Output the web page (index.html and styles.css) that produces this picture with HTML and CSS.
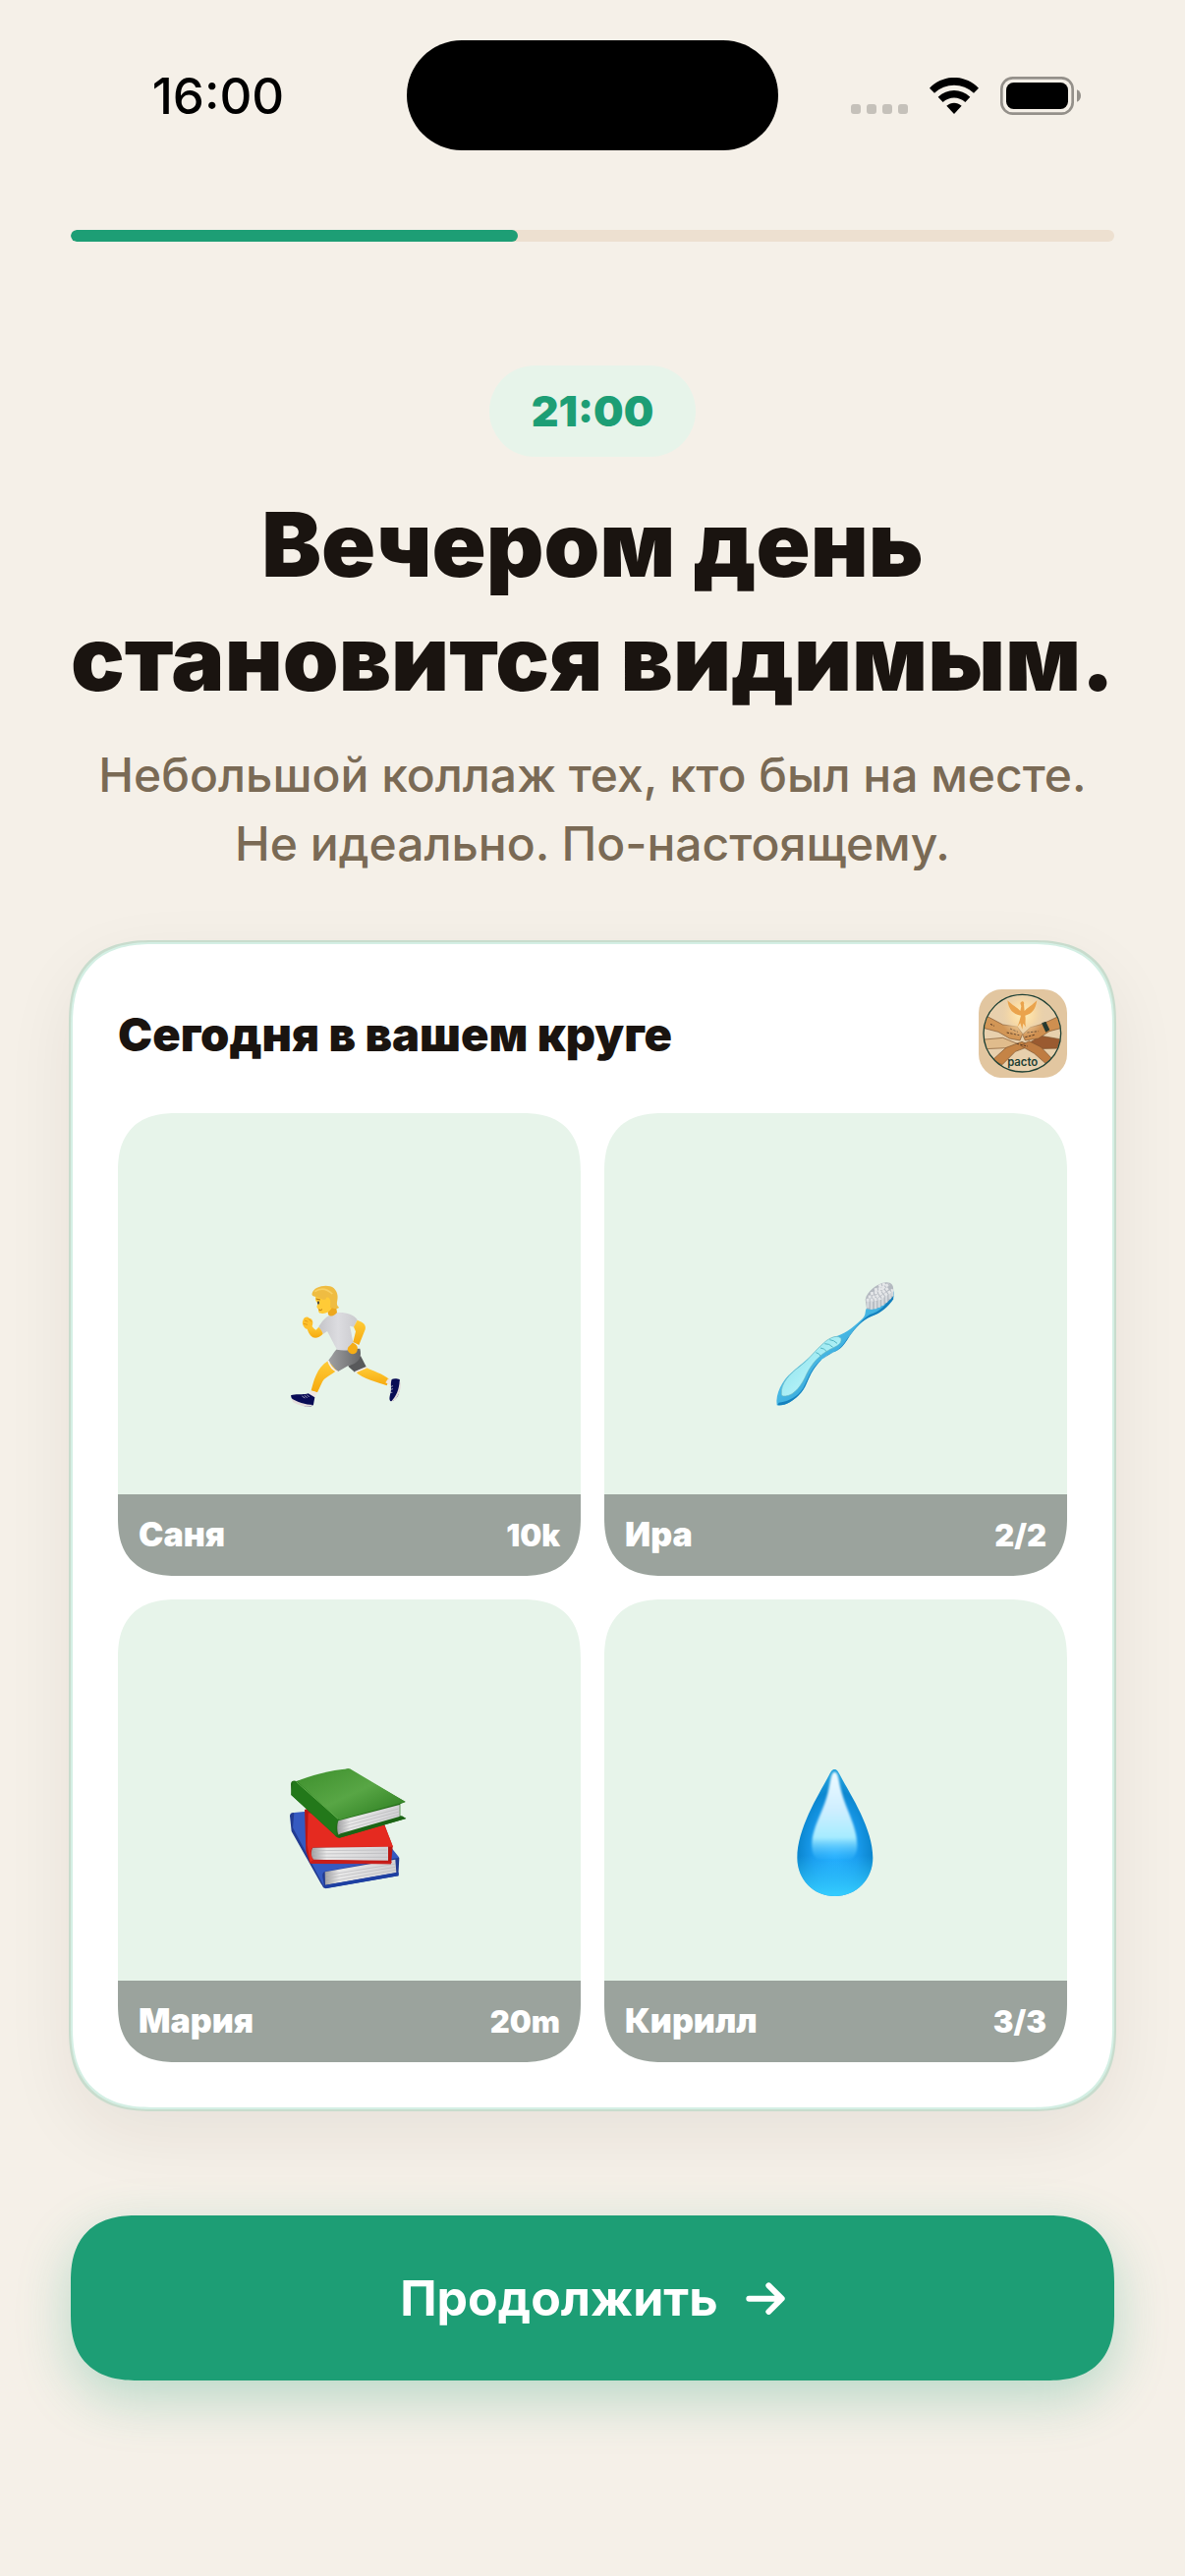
FILE: index.html
```html
<!DOCTYPE html>
<html lang="ru">
<head>
    <meta charset="UTF-8">
    <meta name="viewport" content="width=device-width, initial-scale=1.0">
    <title>Pacto</title>
    <link rel="stylesheet" href="styles.css">
</head>
<body>
    <header class="status-bar">
        <time class="clock">16:00</time>
        <div class="island"></div>
        <div class="status-icons">
            <div class="signal"><i></i><i></i><i></i><i></i></div>
            <svg class="wifi" viewBox="0 0 150 111" aria-hidden="true">
                <path d="M0 32C42-11 108-11 150 32L135 47C102 15 48 15 15 47Z"/>
                <path d="M26 59C54 32 96 32 124 59L109 75C90 57 60 57 41 75Z"/>
                <path d="M52 86C66 74 84 74 98 86L75 111Z"/>
            </svg>
            <svg class="battery" viewBox="0 0 246 117" aria-hidden="true">
                <rect x="4" y="4" width="217" height="109" rx="34" fill="none" stroke="#94908a" stroke-width="8"/>
                <rect x="18" y="18" width="189" height="81" rx="23"/>
                <path d="M234 40C250 46 250 71 234 77Z" fill="#94908a"/>
            </svg>
        </div>
    </header>

    <main>
        <progress class="progress" value="3" max="7" aria-label="Шаг 3 из 7"></progress>

        <section class="intro">
            <p class="badge">21:00</p>
            <h1>Вечером день<br>становится видимым.</h1>
            <p class="subtitle">Небольшой коллаж тех, кто был на месте.<br>Не идеально. По-настоящему.</p>
        </section>

        <section class="card">
            <div class="card-header">
                <h2>Сегодня в вашем круге</h2>
                <svg class="logo" viewBox="0 0 270 270" aria-hidden="true">
                    <defs>
                        <radialGradient id="glow">
                            <stop offset="0" stop-color="#fff1b8"/>
                            <stop offset=".5" stop-color="#fbdca4" stop-opacity=".8"/>
                            <stop offset="1" stop-color="#e9cfa8" stop-opacity="0"/>
                        </radialGradient>
                        <clipPath id="ring"><circle cx="133" cy="134" r="117"/></clipPath>
                    </defs>
                    <rect width="270" height="270" fill="#e2c6a0"/>
                    <circle cx="133" cy="134" r="118" fill="#e8d0ad"/>
                    <g clip-path="url(#ring)">
                        <g stroke="#7d5430" stroke-width="2">
                            <path d="M8 154L74 148L118 166L105 178L20 182Z" fill="#e0bc8c"/>
                            <path d="M260 154L190 142L150 166L166 182L254 180Z" fill="#9a5a30"/>
                            <path d="M42 216L84 178L132 160L160 172L112 190L72 230Z" fill="#c58446"/>
                            <path d="M228 216L190 176L154 158L128 172L170 196L204 226Z" fill="#bf7c42"/>
                            <path d="M10 74L74 108L118 114L134 136L126 156L94 150L60 130L6 116Z" fill="#d29656"/>
                            <path d="M258 76L194 106L158 116L134 138L142 156L182 150L216 128L262 116Z" fill="#cf8f50"/>
                        </g>
                        <path d="M86 132L124 140M96 120L120 130M148 132L182 128M142 146L174 138M116 166L150 174M36 106L48 112" stroke="#553822" stroke-width="3" stroke-dasharray="7 4"/>
                        <path d="M192 103L205 98L217 124L205 131Z" fill="#26392f"/>
                        <ellipse cx="135" cy="74" rx="72" ry="74" fill="url(#glow)"/>
                    </g>
                    <path d="M129 80C104 76 92 62 88 34C104 50 116 54 127 66L130 52L127 42C133 32 141 38 138 46L140 66C152 54 162 50 178 34C174 60 164 75 142 80C145 94 140 100 145 116L136 104L133 122L127 103L117 116C126 98 125 92 129 80Z" fill="#eaa34c"/>
                    <circle cx="133" cy="134" r="118" fill="none" stroke="#1e4034" stroke-width="4"/>
                    <text class="logo-name" x="134" y="234" text-anchor="middle">pacto</text>
                </svg>
            </div>

            <div class="collage">
                <figure class="tile">
                    <svg class="emoji" viewBox="4 10 450 450" aria-hidden="true">
                        <defs>
                            <linearGradient id="shirt"><stop offset="0" stop-color="#c5c5c9"/><stop offset=".5" stop-color="#dcdce0"/><stop offset="1" stop-color="#cacace"/></linearGradient>
                            <linearGradient id="shorts"><stop offset="0" stop-color="#a1a1a3"/><stop offset="1" stop-color="#666769"/></linearGradient>
                            <linearGradient id="skin" x2="0" y2="1"><stop offset="0" stop-color="#ffcc38"/><stop offset="1" stop-color="#f6a90e"/></linearGradient>
                        </defs>
                        <path d="M246 316L278 303C300 315 330 322 350 340L342 359C315 348 268 340 246 316Z" fill="url(#skin)"/>
                        <path d="M338 350L346 338L359 343L355 359Z" fill="#eee5e1"/>
                        <path d="M357 340C364 336 375 338 381 340C384 355 381 377 376 390C371 399 363 405 355 407C347 405 351 390 354 379C357 366 352 354 357 340Z" fill="#080b55"/>
                        <path d="M381 344C390 362 379 391 368 402L355 408C371 391 380 371 381 344Z" fill="#e4dcda"/>
                        <path d="M224 300L262 268L280 303L244 318Z" fill="#58595b"/>
                        <path d="M163 283L190 311C173 328 157 330 146 346L130 380L111 374C119 346 127 305 163 283Z" fill="url(#skin)"/>
                        <path d="M108 375L130 380L121 396L105 389Z" fill="#f0e6e2"/>
                        <path d="M49 389C67 382 86 389 102 383L122 395L118 417C111 426 93 424 80 417C65 408 51 408 49 389Z" fill="#080b55"/>
                        <path d="M50 397C66 409 96 418 116 418C106 430 74 420 56 410Z" fill="#e5dddb"/>
                        <path d="M83 391L92 397M90 389L99 396M98 387L105 394M350 364L361 360M351 372L361 369M350 380L359 380" stroke="#dcdbe4" stroke-width="2"/>
                        <path d="M190 248L260 246C270 285 240 294 223 299L192 317L163 283C178 265 179 257 190 248Z" fill="url(#shorts)"/>
                        <path d="M163 283C168 300 178 311 192 317M245 318L280 303" fill="none" stroke="#f3eeee" stroke-width="5"/>
                        <path d="M190 136C214 134 240 140 252 158L242 180L229 177C235 200 235 220 248 246C225 252 207 253 190 249C179 231 170 211 160 193L148 201L134 179C150 154 163 142 190 136Z" fill="url(#shirt)"/>
                        <path d="M134 180C141 187 145 194 147 201C137 211 127 216 116 212C105 204 101 193 98 183L112 175C117 183 122 188 126 189Z" fill="url(#skin)"/>
                        <path d="M86 160C89 149 100 147 105 153C115 154 118 165 115 174C111 185 101 189 94 185C87 179 82 169 86 160Z" fill="#ffc02b"/>
                        <path d="M91 160L101 164M88 170L100 173M103 155L112 164" stroke="#d58a0f" stroke-width="2"/>
                        <path d="M252 159C270 166 280 173 276 188L257 235L239 226L247 194L241 180Z" fill="url(#skin)"/>
                        <path d="M237 228C250 232 257 240 250 257C241 268 225 262 222 249C223 238 230 238 237 228Z" fill="#f5ad16"/>
                        <path d="M160 112L187 116L190 136C181 147 171 150 163 142Z" fill="#eda71e"/>
                        <path d="M124 86C140 75 168 78 178 96C181 115 171 137 147 139C135 140 132 134 134 128L128 119L131 108L125 100Z" fill="#ffcb37"/>
                        <path d="M114 77C118 59 149 50 169 56C187 61 195 81 191 98C188 110 190 116 196 120C190 128 176 122 169 120L170 103C170 91 158 84 155 96C143 99 139 89 122 87C115 86 112 82 114 77Z" fill="#efbc42"/>
                        <path d="M122 72C141 59 158 62 176 79" fill="none" stroke="#f8d064" stroke-width="5"/>
                        <ellipse cx="133" cy="106" rx="3" ry="5" fill="#3c4149"/>
                        <path d="M126 94L139 97M134 127Q141 131 145 126" fill="none" stroke="#b8710c" stroke-width="3"/>
                    </svg>
                    <figcaption><span class="name">Саня</span><span class="value">10k</span></figcaption>
                </figure>

                <figure class="tile">
                    <svg class="emoji" viewBox="18 10 450 450" aria-hidden="true">
                        <defs>
                            <linearGradient id="handle" x1="0" y1="0" x2="1" y2="1"><stop offset=".3" stop-color="#5bc8ed"/><stop offset=".7" stop-color="#2b9fd6"/></linearGradient>
                            <linearGradient id="grip" x2="1" y2="1"><stop offset="0" stop-color="#82dce9"/><stop offset=".6" stop-color="#b1f1f7"/></linearGradient>
                        </defs>
                        <path d="M62 419C57 383 78 343 108 318C136 294 157 279 181 253C204 228 220 212 247 207C277 198 302 174 323 155C338 140 327 129 340 119L416 67C423 76 421 91 411 102C392 122 376 139 351 147C322 159 301 184 283 208C266 236 258 249 230 259C206 270 190 286 174 310C153 340 155 364 129 388C110 407 85 423 62 419Z" fill="url(#handle)"/>
                        <path d="M68 411C101 408 127 390 142 367C156 343 162 313 193 284C222 259 246 258 266 231C293 193 319 158 346 142C376 134 394 112 416 84L418 95C400 120 382 137 351 147C323 157 302 183 284 208C267 235 257 250 230 259C203 271 188 290 173 311C153 343 153 364 129 388C109 408 86 422 64 418Z" fill="#1580bd"/>
                        <path d="M76 384C73 354 101 322 130 302C161 279 179 250 205 229C226 208 252 204 258 216C260 232 245 238 225 248C189 267 170 291 153 323C139 356 116 389 88 391C79 392 76 389 76 384Z" fill="url(#grip)" stroke="#70bac1" stroke-width="2"/>
                        <path d="M181 258Q191 260 196 269M195 244Q207 245 215 256M208 231Q222 230 233 242M223 219Q236 220 246 230" fill="none" stroke="#55b6c3" stroke-width="3"/>
                        <path d="M332 96C337 72 366 48 393 44C410 42 420 53 417 67L418 85C396 111 365 132 336 125Z" fill="#b4b9c0"/>
                        <path d="M340 101V122M351 102V126M363 101V125M374 95V120M385 90V114M396 79V105M407 72V95M415 65V86" stroke="#d5d9dd" stroke-width="7"/>
                        <path d="M335 98L354 98L377 93L392 82L416 67M341 88L365 88L384 75L403 60M348 78L372 74L391 57M360 67L381 62L405 49M373 56L393 48" fill="none" stroke="#e4e6e8" stroke-width="9" stroke-dasharray="9 3"/>
                    </svg>
                    <figcaption><span class="name">Ира</span><span class="value">2/2</span></figcaption>
                </figure>

                <figure class="tile">
                    <svg class="emoji" viewBox="4 25 450 450" aria-hidden="true">
                        <defs>
                            <linearGradient id="green" x2="1" y2="1"><stop offset="0" stop-color="#3d8f2c"/><stop offset=".5" stop-color="#58a645"/><stop offset="1" stop-color="#26781b"/></linearGradient>
                            <linearGradient id="pages"><stop offset="0" stop-color="#9d9d9f"/><stop offset=".2" stop-color="#e8e8e8"/><stop offset="1" stop-color="#d1d1d4"/></linearGradient>
                        </defs>
                        <path d="M46 203C47 190 59 192 65 196L330 278L380 332L377 386L155 424C147 425 146 416 141 410L51 250Z" fill="#223b91"/>
                        <path d="M59 193L90 190L356 300L380 330L153 373C144 376 145 386 148 399L151 420L55 239Z" fill="#355ac1"/>
                        <path d="M153 374L368 336L371 376L154 414Z" fill="url(#pages)"/>
                        <path d="M158 384L366 350M158 394L368 359M158 405L370 368" stroke="#b7b7b9" stroke-width="2"/>
                        <path d="M151 415L378 375V386L155 425Z" fill="#1d3fa2"/>
                        <path d="M91 184L102 180L335 230L360 296L355 350L107 346L95 310Z" fill="#ba1713"/>
                        <path d="M102 194L335 232L361 297L119 298C107 302 108 320 119 338L108 345L99 292Z" fill="#e52a20"/>
                        <path d="M116 300L346 297V339L120 337C110 329 109 310 116 300Z" fill="url(#pages)"/>
                        <path d="M119 309L342 307M117 319L344 317M118 329L345 329" stroke="#b7b7b9" stroke-width="2"/>
                        <path d="M105 345L121 336L358 342L354 350L111 349Z" fill="#c81e1b"/>
                        <path d="M49 105C50 95 58 94 67 97L224 59L399 160L383 167V203L401 211L197 270C188 271 184 263 180 259L50 139Z" fill="#236c18"/>
                        <path d="M67 97C106 82 167 63 229 59L399 160L193 216Z" fill="url(#green)"/>
                        <path d="M55 99L68 98L198 216C187 222 184 236 188 264L50 139Z" fill="#23781a"/>
                        <path d="M66 99L193 212" fill="none" stroke="#61ad4c" stroke-width="3"/>
                        <path d="M194 218L381 169V207L195 262C190 253 189 232 194 218Z" fill="url(#pages)"/>
                        <path d="M196 229L378 181M195 239L380 190M196 250L380 199" stroke="#b7b7b9" stroke-width="2"/>
                        <path d="M188 264L201 257L388 203L401 211L197 270Z" fill="#1b6415"/>
                    </svg>
                    <figcaption><span class="name">Мария</span><span class="value">20m</span></figcaption>
                </figure>

                <figure class="tile">
                    <svg class="emoji" viewBox="18 26 450 450" aria-hidden="true">
                        <defs>
                            <radialGradient id="water" cx=".5" cy=".65" r=".6"><stop offset="0" stop-color="#24adff"/><stop offset=".5" stop-color="#199bed"/><stop offset=".8" stop-color="#0c87d0"/><stop offset="1" stop-color="#20a0dc"/></radialGradient>
                            <linearGradient id="base" x2="0" y2="1"><stop offset=".68" stop-color="#32c8ff" stop-opacity="0"/><stop offset="1" stop-color="#35ceff"/></linearGradient>
                            <linearGradient id="shine" x2="0" y2="1"><stop offset="0" stop-color="#eefaff"/><stop offset=".45" stop-color="#cdeeff"/><stop offset=".75" stop-color="#a6ecff"/><stop offset="1" stop-color="#3cbdff" stop-opacity=".2"/></linearGradient>
                            <filter id="soft"><feGaussianBlur stdDeviation="3"/></filter>
                        </defs>
                        <path d="M238 62C246 62 250 70 255 80C290 145 355 244 355 332C355 398 304 449 239 449C174 449 124 398 124 332C124 244 186 145 221 80C226 70 230 62 238 62Z" fill="url(#water)"/>
                        <path d="M238 62C246 62 250 70 255 80C290 145 355 244 355 332C355 398 304 449 239 449C174 449 124 398 124 332C124 244 186 145 221 80C226 70 230 62 238 62Z" fill="url(#base)"/>
                        <path d="M238 70C249 70 250 93 257 122C273 188 307 235 307 294C307 320 297 336 283 336H193C177 336 169 320 169 294C169 235 208 188 220 122C226 94 228 70 238 70Z" fill="url(#shine)" filter="url(#soft)"/>
                    </svg>
                    <figcaption><span class="name">Кирилл</span><span class="value">3/3</span></figcaption>
                </figure>
            </div>
        </section>

        <button class="continue" type="button">
            Продолжить
            <svg class="arrow" viewBox="0 0 120 99" aria-hidden="true">
                <path d="M10 50H109M70 10L110 50L70 90"/>
            </svg>
        </button>
    </main>
</body>
</html>
```
FILE: styles.css
```css
:root{
    --bg: #f5f0e8;
    --green: #1d9e75;
    --mint: #e7f4ea;
    --ink: #1a1410;
    --brown: #7a6a55;
    --sand: #ede0d0;
}

*{
    margin: 0;
    padding: 0;
    box-sizing: border-box;
}

body{
    min-height: 100vh;
    background-color: var(--bg);
    color: var(--ink);
    font-family: Inter, "Liberation Sans", sans-serif;
}

/* status bar */
.status-bar{
    display: grid;
    grid-template-columns: 1fr 378px 1fr;
    align-items: center;
    padding-top: 41px;
}

.clock{
    justify-self: center;
    padding-left: 30px;
    color: #000;
    font-size: 51px;
    font-weight: 500;
}

.island{
    height: 112px;
    border-radius: 56px;
    background-color: #000;
}

.status-icons{
    display: flex;
    justify-content: center;
    align-items: center;
    gap: 22px;
    padding-right: 32px;
}

.signal{
    display: flex;
    gap: 6px;
    padding-top: 28px;
}

.signal i{
    width: 10px;
    height: 10px;
    border-radius: 3px;
    background-color: #c5c1ba;
}

.wifi{
    width: 50px;
    height: 37px;
}

.battery{
    width: 82px;
    height: 39px;
}

/* page */
main{
    display: flex;
    flex-direction: column;
    padding: 81px 72px 72px;
}

.progress{
    appearance: none;
    display: block;
    width: 100%;
    height: 12px;
    border: none;
    border-radius: 6px;
    overflow: hidden;
    background-color: var(--sand);
}

.progress::-webkit-progress-bar{
    background-color: var(--sand);
}

.progress::-webkit-progress-value{
    border-radius: 6px;
    background-color: var(--green);
}

.intro{
    display: flex;
    flex-direction: column;
    align-items: center;
    margin-top: 126px;
    text-align: center;
    white-space: nowrap;
}

.badge{
    padding: 0 43px;
    border-radius: 47px;
    background-color: var(--mint);
    color: var(--green);
    font-size: 43px;
    font-weight: 900;
    line-height: 93px;
}

h1{
    margin-top: 31px;
    font-size: 91px;
    font-weight: 900;
    line-height: 116px;
}

.subtitle{
    margin-top: 26px;
    color: var(--brown);
    font-size: 48px;
    font-weight: 500;
    line-height: 70px;
}

/* card */
.card{
    margin-top: 65px;
    padding: 46px;
    border: 2px solid #d4efe4;
    border-radius: 84px;
    corner-shape: superellipse(1.3);
    background-color: #fff;
    box-shadow: 0 0 0 2px #c8dccd, 0 24px 72px rgba(40, 30, 25, 0.07);
}

.card-header{
    display: flex;
    justify-content: space-between;
    align-items: center;
}

h2{
    font-size: 47px;
    font-weight: 900;
}

.logo{
    width: 90px;
    height: 90px;
    border-radius: 24px;
}

.logo-name{
    fill: #1e4034;
    font-size: 34px;
    font-weight: 600;
}

.collage{
    display: grid;
    grid-template-columns: 1fr 1fr;
    gap: 24px;
    margin-top: 36px;
}

.tile{
    position: relative;
    display: flex;
    justify-content: center;
    align-items: center;
    aspect-ratio: 1;
    border-radius: 60px;
    corner-shape: superellipse(1.3);
    overflow: hidden;
    background-color: var(--mint);
}

.emoji{
    width: 150px;
    height: 150px;
}

.tile figcaption{
    position: absolute;
    inset: auto 0 0;
    display: flex;
    justify-content: space-between;
    align-items: baseline;
    padding: 0 21px;
    background-color: rgba(0, 0, 0, 0.33);
    color: #fff;
    font-weight: 900;
    line-height: 82px;
}

.name{
    font-size: 34px;
}

.value{
    font-size: 31px;
}

.continue{
    display: flex;
    justify-content: center;
    align-items: center;
    gap: 28px;
    height: 168px;
    margin-top: 108px;
    border: none;
    border-radius: 68px;
    corner-shape: superellipse(1.3);
    background-color: var(--green);
    box-shadow: 0 18px 54px rgba(29, 158, 117, 0.28);
    color: #fff;
    font-family: inherit;
    font-size: 50px;
    font-weight: 700;
    cursor: pointer;
}

.arrow{
    width: 40px;
    height: 33px;
}

.arrow path{
    fill: none;
    stroke: #fff;
    stroke-width: 18;
    stroke-linecap: round;
    stroke-linejoin: round;
}
```
